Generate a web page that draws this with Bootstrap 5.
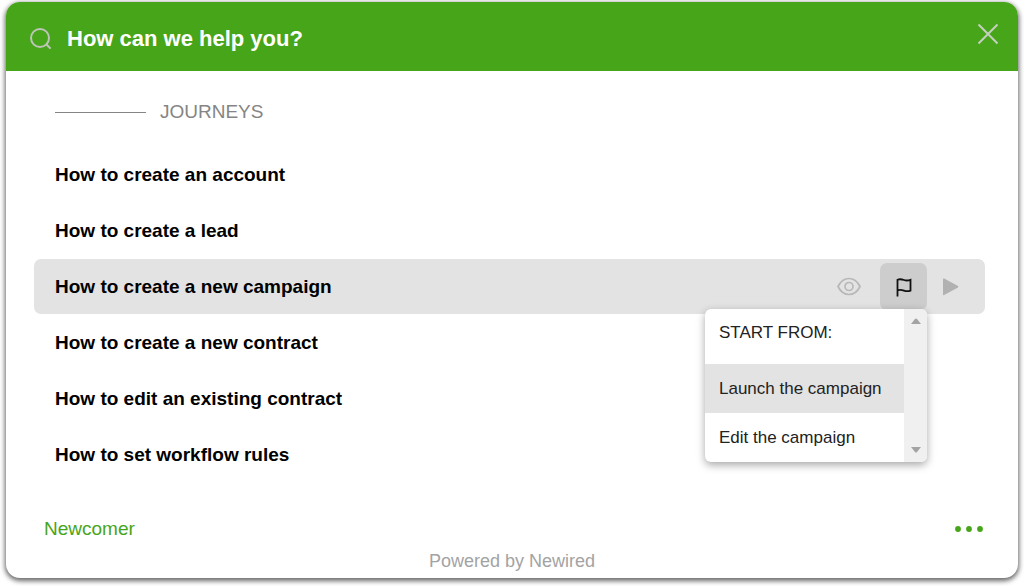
<!DOCTYPE html>
<html lang="en">
<head>
<meta charset="utf-8">
<meta name="viewport" content="width=device-width, initial-scale=1">
<title>How can we help you?</title>
<link href="https://cdn.jsdelivr.net/npm/bootstrap@5.3.0/dist/css/bootstrap.min.css" rel="stylesheet">
<style>
  :root { --brand: #47a519; --hover: #e3e3e3; }
  body { font-family: "Liberation Sans", Arial, sans-serif; background: #fff; font-size: 19px; line-height: 24px; }
  .help-panel { margin: 2px 6px 8px; border-radius: 14px; background: #fff; box-shadow: 0 2px 5px 1px rgba(0,0,0,.6); }
  .help-head { background: var(--brand); border-radius: 14px 14px 0 0; padding: 20px 18px 15px 23px; }
  .help-search { color: #fff; font-size: 22px; line-height: 32px; font-weight: 700; outline: 0; margin-left: 14px; }
  .help-search::placeholder { color: #fff; opacity: 1; }
  .plain-btn { border: 0; padding: 0; background: none; display: flex; align-items: center; justify-content: center; }
  .close-btn { margin-bottom: 10px; }
  .help-body { padding: 29px 33px 0 28px; }
  .section-title { color: #858585; gap: 14px; padding-left: 21px; margin-bottom: 23px; }
  .section-rule { width: 91px; height: 1px; background: #858585; }
  .journeys { gap: 1px; }
  .journey { height: 55px; padding: 0 21px; border-radius: 7px; }
  .journey.is-open { background: var(--hover); padding-right: 11px; }
  .journey > a { color: #000; font-weight: 700; }
  .act { width: 47px; height: 47px; border-radius: 7px; }
  .act.pressed { background: #cdcdcd; }
  .start-menu { position: absolute; top: 46px; right: 0; z-index: 5; width: 222px; border-radius: 6px; background: #fff; overflow: hidden; box-shadow: 0 3px 8px rgba(0,0,0,.35); font-size: 17px; color: #222; }
  .start-menu .menu-title { height: 55px; padding: 12px 14px; }
  .start-menu a { display: flex; align-items: center; height: 49px; padding: 0 14px; color: #222; white-space: nowrap; }
  .start-menu a.current { background: var(--hover); }
  .scroll-track { width: 23px; background: #f0f0f0; padding: 9px 0; }
  .help-foot { padding: 35px 33px 8px 38px; }
  .help-foot a { color: var(--brand); }
  .powered { color: #a3a3a3; font-size: 18px; padding-bottom: 5px; }
</style>
</head>
<body>
<main class="help-panel">
  <header class="help-head d-flex align-items-center">
    <label for="q" class="flex-shrink-0 d-flex" aria-label="Search">
      <svg width="24" height="24" viewBox="0 0 24 24" fill="none" stroke="#bdc4b8" stroke-width="2" stroke-linecap="round" aria-hidden="true"><circle cx="11" cy="11" r="9"/><path d="M17.500 17.500l3.500 3.500"/></svg>
    </label>
    <input id="q" type="text" class="help-search flex-grow-1 bg-transparent border-0 p-0" placeholder="How can we help you?">
    <button type="button" class="plain-btn close-btn" aria-label="Close">
      <svg width="24" height="24" viewBox="0 0 24 24" fill="none" stroke="#c4cfbf" stroke-width="2"><path d="M2.500 2.500l19 19M21.500 2.500l-19 19"/></svg>
    </button>
  </header>

  <section class="help-body">
    <div class="section-title d-flex align-items-center"><span class="section-rule"></span><span>JOURNEYS</span></div>
    <ul class="journeys list-unstyled d-flex flex-column mb-0">
      <li class="journey d-flex align-items-center"><a href="#" class="text-decoration-none">How to create an account</a></li>
      <li class="journey d-flex align-items-center"><a href="#" class="text-decoration-none">How to create a lead</a></li>
      <li class="journey is-open d-flex align-items-center">
        <a href="#" class="text-decoration-none me-auto">How to create a new campaign</a>
        <button type="button" class="act plain-btn me-2" aria-label="Preview">
          <svg width="24" height="20" viewBox="0 0 24 20" fill="none" stroke="#b8b8b8" stroke-width="1.700"><path d="M1 9.500C3.500 4.500 7.500 1.500 12 1.500s8.500 3 11 8c-2.500 5-6.500 8-11 8s-8.500-3-11-8z"/><circle cx="12" cy="9.500" r="4"/></svg>
        </button>
        <div class="position-relative">
          <button type="button" class="act pressed plain-btn" aria-label="Start from" aria-expanded="true">
            <svg width="18" height="20" viewBox="0 0 18 20" fill="none" stroke="#111" stroke-width="1.800"><path d="M2.500 19.500V2.800C5 1.700 7 2.300 9 3s4 .7 6.500-.2v10.800c-2.500.9-4.500.7-6.500 0s-4-1.100-6.500-.3"/></svg>
          </button>
          <div class="start-menu d-flex">
            <div class="flex-grow-1">
              <div class="menu-title">START FROM:</div>
              <a href="#" class="current text-decoration-none">Launch the campaign</a>
              <a href="#" class="text-decoration-none">Edit the campaign</a>
            </div>
            <div class="scroll-track d-flex flex-column align-items-center justify-content-between" aria-hidden="true">
              <svg width="10" height="6" viewBox="0 0 10 6" fill="#a3a3a3"><path d="M0 6l4-5q1-1 2 0l4 5z"/></svg>
              <svg width="10" height="6" viewBox="0 0 10 6" fill="#a3a3a3"><path d="M0 0l4 5q1 1 2 0l4-5z"/></svg>
            </div>
          </div>
        </div>
        <button type="button" class="act plain-btn" aria-label="Play">
          <svg width="16" height="18" viewBox="0 0 16 18" fill="#b1b1b1"><path d="M0 1.200Q0 0 1.200.6L15 8q1 .8 0 1.600L1.200 17Q0 17.500 0 16.500z"/></svg>
        </button>
      </li>
      <li class="journey d-flex align-items-center"><a href="#" class="text-decoration-none">How to create a new contract</a></li>
      <li class="journey d-flex align-items-center"><a href="#" class="text-decoration-none">How to edit an existing contract</a></li>
      <li class="journey d-flex align-items-center"><a href="#" class="text-decoration-none">How to set workflow rules</a></li>
    </ul>
  </section>

  <footer>
    <div class="help-foot d-flex align-items-center justify-content-between">
      <a href="#" class="text-decoration-none">Newcomer</a>
      <button type="button" class="plain-btn" aria-label="More">
        <svg width="32" height="8" viewBox="0 0 32 8" fill="#47a519"><circle cx="5" cy="4" r="2.900"/><circle cx="16" cy="4" r="2.900"/><circle cx="27" cy="4" r="2.900"/></svg>
      </button>
    </div>
    <div class="powered text-center">Powered by Newired</div>
  </footer>
</main>
<script src="https://cdn.jsdelivr.net/npm/bootstrap@5.3.0/dist/js/bootstrap.bundle.min.js"></script>
</body>
</html>
